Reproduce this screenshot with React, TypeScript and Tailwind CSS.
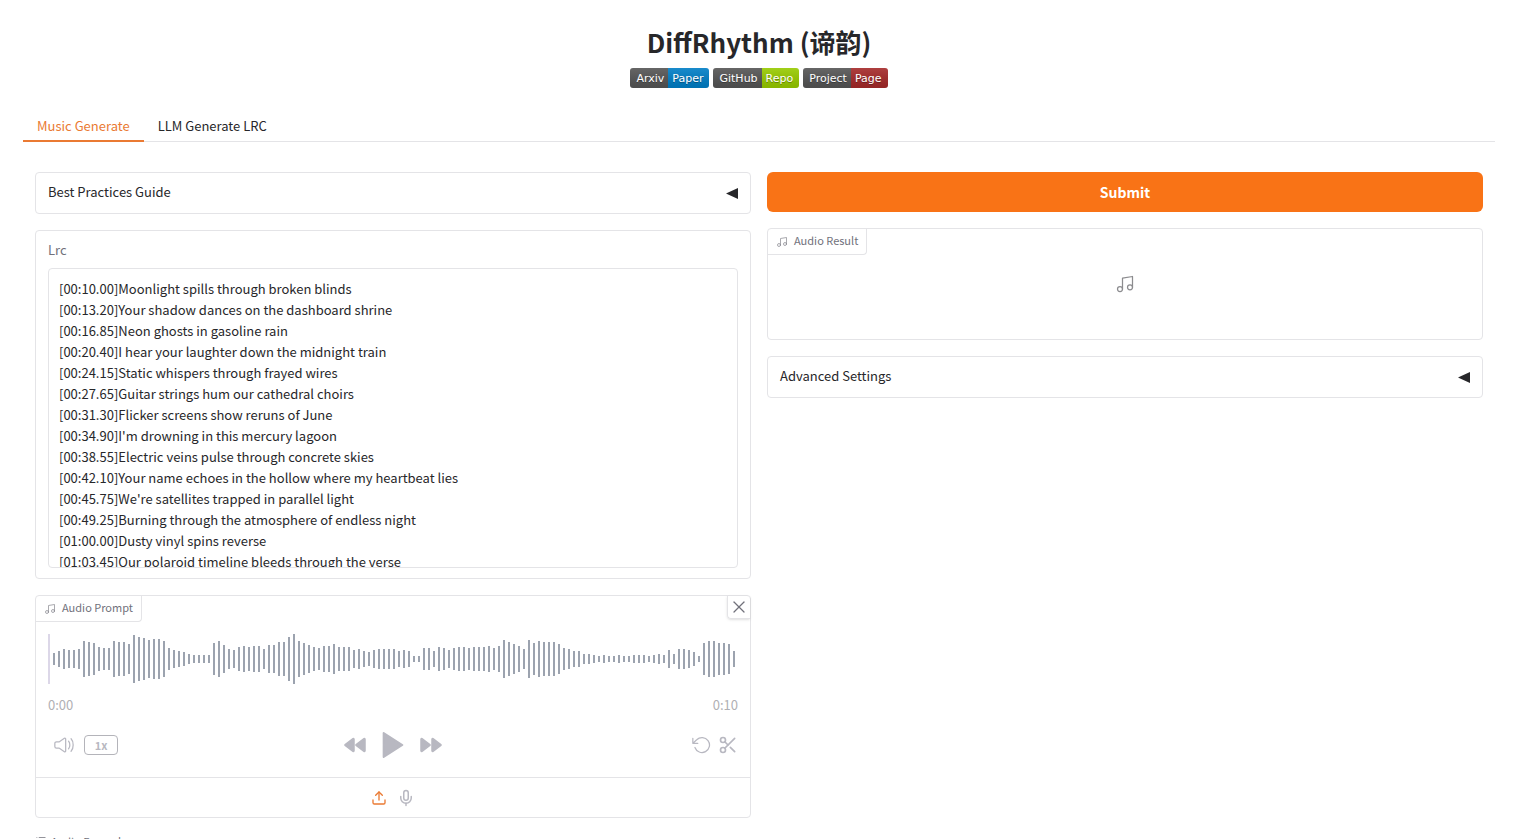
import clsx from 'clsx'
import { Mic, Music, Scissors, Upload, X } from 'lucide-react'
import { useState } from 'react'

const LYRICS = `[00:10.00]Moonlight spills through broken blinds
[00:13.20]Your shadow dances on the dashboard shrine
[00:16.85]Neon ghosts in gasoline rain
[00:20.40]I hear your laughter down the midnight train
[00:24.15]Static whispers through frayed wires
[00:27.65]Guitar strings hum our cathedral choirs
[00:31.30]Flicker screens show reruns of June
[00:34.90]I'm drowning in this mercury lagoon
[00:38.55]Electric veins pulse through concrete skies
[00:42.10]Your name echoes in the hollow where my heartbeat lies
[00:45.75]We're satellites trapped in parallel light
[00:49.25]Burning through the atmosphere of endless night
[01:00.00]Dusty vinyl spins reverse
[01:03.45]Our polaroid timeline bleeds through the verse`

const PEAKS = [
  12, 16, 20, 18, 18, 20, 36, 34, 32, 24, 22, 22, 36, 34, 34, 30, 48, 44, 42, 38, 40, 40, 36, 22, 18, 16, 14, 10, 8, 8,
  8, 8, 32, 36, 28, 20, 18, 24, 26, 24, 26, 26, 20, 28, 28, 34, 34, 44, 50, 36, 32, 28, 24, 22, 26, 26, 30, 24, 24, 24,
  18, 20, 16, 14, 18, 20, 20, 20, 20, 16, 18, 16, 6, 6, 22, 22, 16, 24, 22, 18, 22, 24, 24, 22, 24, 24, 24, 26, 22, 26,
  38, 34, 30, 26, 20, 38, 32, 36, 34, 34, 34, 30, 22, 20, 16, 16, 10, 10, 8, 6, 8, 6, 6, 8, 6, 6, 8, 8, 8, 6, 8, 10, 8,
  18, 10, 20, 20, 18, 14, 6, 32, 36, 36, 32, 32, 30, 16,
]

const BADGES = [
  { label: 'Arxiv', value: 'Paper', color: 'bg-[#007ec6]' },
  { label: 'GitHub', value: 'Repo', color: 'bg-[#97ca00]' },
  { label: 'Project', value: 'Page', color: 'bg-[#a52a2a]' },
]

const TABS = ['Music Generate', 'LLM Generate LRC']

const CARD = 'rounded border border-zinc-200 bg-white'

const Badge = ({ label, value, color }: { label: string; value: string; color: string }) => (
  <a
    href="#"
    className="flex h-5 overflow-hidden rounded-[3px] font-['DejaVu_Sans',sans-serif] text-[11px] leading-[21px] text-white [text-shadow:0_1px_0_rgba(1,1,1,0.3)]"
  >
    <span className="bg-[#555] bg-linear-to-b from-white/10 to-black/10 pl-1.5 pr-1">{label}</span>
    <span className={clsx(color, 'bg-linear-to-b from-white/10 to-black/10 pl-1 pr-1.5')}>{value}</span>
  </a>
)

const Accordion = ({ title }: { title: string }) => (
  <button type="button" className={clsx(CARD, 'flex h-[42px] w-full items-center justify-between px-3 text-left')}>
    <span className="pb-0.5">{title}</span>
    <svg viewBox="0 0 12 11" className="h-[11px] w-3 fill-zinc-800">
      <path d="M0 5.5 12 0v11z" />
    </svg>
  </button>
)

const BlockLabel = ({ children }: { children: string }) => (
  <div className="flex h-[26px] items-center gap-1.5 rounded-br border-r border-b border-zinc-200 px-2 text-[11px] leading-4 text-zinc-500">
    <Music className="size-3 opacity-80" strokeWidth={1.5} />
    <span className="pb-1">{children}</span>
  </div>
)

const Waveform = () => (
  <svg viewBox="0 0 690 50" preserveAspectRatio="none" className="block h-[50px] w-full">
    <rect x="0" y="0" width="2" height="50" fill="#dcd7e8" />
    {PEAKS.map((peak, i) => (
      <rect key={i} x={5 + i * 5} y={25 - peak / 2} width="2" height={peak} fill="#9ca3af" />
    ))}
  </svg>
)

const VolumeIcon = () => (
  <svg viewBox="0 0 24 24" className="size-5" fill="none" stroke="currentColor" strokeWidth="1.5" strokeLinecap="round">
    <path d="M1 13.86v-3.72a2 2 0 0 1 2-2h2.9a1 1 0 0 0 .55-.16l6-3.96a1 1 0 0 1 1.55.84v14.28a1 1 0 0 1-1.55.84l-6-3.96a1 1 0 0 0-.55-.16H3a2 2 0 0 1-2-2z" />
    <path d="M17.5 7.5S19 9 19 12s-1.5 4.5-1.5 4.5M20.5 4.5S23 7 23 12s-2.5 7.5-2.5 7.5" />
  </svg>
)

const SkipIcon = ({ className }: { className?: string }) => (
  <svg viewBox="0 0 24 24" className={clsx('size-6', className)} fill="currentColor" stroke="currentColor" strokeWidth="1.5">
    <path d="M21.044 5.704a.6.6 0 0 1 .956.483v11.626a.6.6 0 0 1-.956.483l-7.889-5.813a.6.6 0 0 1 0-.966zM10.044 5.704a.6.6 0 0 1 .956.483v11.626a.6.6 0 0 1-.956.483l-7.888-5.813a.6.6 0 0 1 0-.966z" />
  </svg>
)

const AudioPrompt = () => (
  <section className={CARD}>
    <div className="flex items-start justify-between">
      <BlockLabel>Audio Prompt</BlockLabel>
      <button
        type="button"
        aria-label="Clear"
        className="flex size-[23px] items-center justify-center rounded-bl border-b border-l border-zinc-200 text-zinc-500 shadow-sm"
      >
        <X className="size-5" strokeWidth={1.5} />
      </button>
    </div>
    <div className="px-3 pt-3">
      <Waveform />
      <div className="mt-[11px] flex justify-between leading-5 text-[#b0b0b4]">
        <time>0:00</time>
        <time>0:10</time>
      </div>
      <div className="mt-2.5 grid h-10 grid-cols-3 items-center text-[#b8b8c1]">
        <div className="flex items-center gap-2.5 pl-1.5">
          <button type="button" aria-label="Volume">
            <VolumeIcon />
          </button>
          <button
            type="button"
            className="h-5 w-[34px] rounded border border-[#b4b4ba] text-[11px] leading-4 font-bold"
          >
            1x
          </button>
        </div>
        <div className="flex items-center justify-center gap-2.5">
          <button type="button" aria-label="Back">
            <SkipIcon />
          </button>
          <button type="button" aria-label="Play">
            <svg viewBox="0 0 24 24" className="size-8" fill="currentColor" stroke="currentColor" strokeWidth="1.5" strokeLinejoin="round">
              <path d="M5 3l14 9-14 9z" />
            </svg>
          </button>
          <button type="button" aria-label="Forward">
            <SkipIcon className="-scale-x-100" />
          </button>
        </div>
        <div className="flex items-center justify-end gap-1.5">
          <button type="button" aria-label="Undo">
            <svg viewBox="0 0 24 24" className="size-5" fill="none" stroke="currentColor" strokeWidth="1.5" strokeLinecap="round" strokeLinejoin="round">
              <path d="M1 4v6h6M3.51 15a9 9 0 1 0 2.13-9.36L1 10" />
            </svg>
          </button>
          <button type="button" aria-label="Trim">
            <Scissors className="size-5" strokeWidth={2} />
          </button>
        </div>
      </div>
    </div>
    <div className="mt-3 flex h-10 items-center justify-center gap-2.5 border-t border-zinc-200">
      <button type="button" aria-label="Upload file" className="text-[#ea7a33]">
        <Upload className="size-4" />
      </button>
      <button type="button" aria-label="Record audio" className="text-[#b8b8c1]">
        <Mic className="size-[18px]" />
      </button>
    </div>
  </section>
)

export default function App() {
  const [tab, setTab] = useState(TABS[0])
  const [lrc, setLrc] = useState(LYRICS)

  return (
    <main className="h-screen overflow-hidden bg-white pt-[22px] pr-[27px] pl-[23px] font-['Noto_Sans_CJK_SC',sans-serif] text-[13px] leading-5 text-zinc-800">
      <h1 className="text-center text-[26px] leading-10 font-bold">DiffRhythm (谛韵)</h1>
      <div className="mt-1.5 flex justify-center gap-1">
        {BADGES.map((badge) => (
          <Badge key={badge.label} {...badge} />
        ))}
      </div>

      <div role="tablist" className="mt-6 flex h-[30px] border-b border-zinc-200">
        {TABS.map((name) => (
          <button
            key={name}
            type="button"
            role="tab"
            aria-selected={tab === name}
            onClick={() => setTab(name)}
            className={clsx(
              'h-[30px] border-b-2 px-3.5',
              tab === name ? 'border-[#ea7a33] text-[#ea7a33]' : 'border-transparent'
            )}
          >
            {name}
          </button>
        ))}
      </div>

      <div className="grid grid-cols-2 items-start gap-4 px-3 pt-[30px]">
        <div className="flex flex-col gap-4">
          <Accordion title="Best Practices Guide" />
          <div className={clsx(CARD, 'px-3 pt-[9px] pb-2.5')}>
            <label htmlFor="lrc" className="block text-zinc-500">
              Lrc
            </label>
            <textarea
              id="lrc"
              value={lrc}
              onChange={(e) => setLrc(e.target.value)}
              className="mt-2 block h-[300px] w-full resize-none overflow-hidden rounded border border-zinc-200 px-2.5 py-[9px] leading-[21px] outline-none"
            />
          </div>
          <AudioPrompt />
          <div className="flex items-center gap-1 text-[11px] leading-[14px] text-zinc-500">
            <svg viewBox="0 0 32 32" className="size-3 fill-current">
              <path d="M10 6h18v2H10zm0 18h18v2H10zm0-9h18v2H10zm-6 0h2v2H4zm0-9h2v2H4zm0 18h2v2H4z" />
            </svg>
            Audio Examples
          </div>
        </div>

        <div className="flex flex-col gap-4">
          <button type="button" className="h-10 rounded-md bg-[#f97316] text-sm font-bold text-white">
            Submit
          </button>
          <section className={clsx(CARD, 'relative flex h-28 items-center justify-center')}>
            <div className="absolute top-0 left-0">
              <BlockLabel>Audio Result</BlockLabel>
            </div>
            <Music className="size-5 text-[#8c8c8f]" strokeWidth={1.5} />
          </section>
          <Accordion title="Advanced Settings" />
        </div>
      </div>
    </main>
  )
}
